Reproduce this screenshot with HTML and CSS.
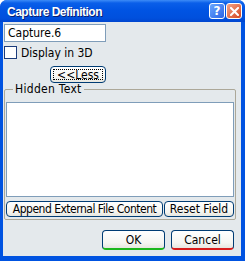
FILE: index.html
```html
<!DOCTYPE html>
<html>
<head>
	<title>Capture Definition</title>
	<link rel="stylesheet" href="styles.css">
</head>
<body>
	<div class="window">
		<div class="titlebar">
			<span class="title">Capture Definition</span>
			<div class="title-buttons">
				<span class="tbtn help">?</span>
				<span class="tbtn close">
					<svg width="9" height="9" viewBox="0 0 9 9"><path d="M1 1 L8 8 M8 1 L1 8" stroke="#fff" stroke-width="2" stroke-linecap="square"/></svg>
				</span>
			</div>
		</div>
		<div class="client">
			<div class="name-field">Capture.6</div>
			<label class="check-row"><span class="checkbox"></span>Display in 3D</label>
			<div class="less-row"><button class="btn less"><span class="focus">&lt;&lt;Less</span></button></div>
			<fieldset class="group">
				<legend>Hidden Text</legend>
				<div class="textarea"></div>
				<div class="group-buttons">
					<button class="btn append">Append External File Content</button>
					<button class="btn reset">Reset Field</button>
				</div>
			</fieldset>
			<div class="footer">
				<button class="btn ok">OK</button>
				<button class="btn cancel">Cancel</button>
			</div>
		</div>
	</div>
</body>
</html>
```

FILE: styles.css
```css
* {
	margin: 0;
	padding: 0;
	box-sizing: border-box;
}
body {
	font-family: 'DejaVu Sans Condensed', 'DejaVu Sans', sans-serif;
	font-size: 12px;
	background: #fff;
}
.window {
	width: 245px;
	height: 261px;
	background: #0053e1;
	border-radius: 7px 7px 0 0;
	display: flex;
	flex-direction: column;
}
.titlebar {
	height: 22px;
	display: flex;
	align-items: center;
	justify-content: space-between;
	padding: 0 3px 0 7px;
	background: linear-gradient(#3d8cf7 0, #0a5fe9 3px, #0054e3 10px, #0050dd 18px, #0046cf 22px);
	border-radius: 7px 7px 0 0;
}
.title {
	color: #fff;
	font-family: 'Liberation Sans', Arial, sans-serif;
	font-weight: bold;
	font-size: 12px;
	letter-spacing: -0.5px;
	text-shadow: 1px 1px #0a1e6e;
	padding-top: 1px;
}
.title-buttons {
	display: flex;
	gap: 1px;
}
.tbtn {
	width: 16px;
	height: 16px;
	border: 1px solid #fff;
	border-radius: 3px;
	display: flex;
	align-items: center;
	justify-content: center;
	color: #fff;
	font-weight: bold;
	font-size: 12px;
	font-family: 'DejaVu Sans', sans-serif;
}
.help {
	background: linear-gradient(135deg, #6aa6ff, #2a64e6);
}
.close {
	background: linear-gradient(135deg, #f3a488, #d4461f);
}
.client {
	flex: 1;
	margin: 0 4px 5px 3px;
	background: #e4e9ec;
	padding: 2px 0 0 1px;
	display: flex;
	flex-direction: column;
}
.name-field {
	width: 102px;
	height: 18px;
	background: #fff;
	border: 1px solid #7f9db9;
	padding: 1px 0 0 3px;
	color: #000;
	line-height: 14px;
}
.check-row {
	display: flex;
	align-items: center;
	gap: 4px;
	margin-top: 4px;
	height: 13px;
}
.checkbox {
	width: 13px;
	height: 13px;
	border: 1px solid #1c3c7c;
	background: #fff;
}
.less-row {
	padding-left: 46px;
	margin-top: 7px;
}
.btn {
	font-family: inherit;
	font-size: 12px;
	color: #000;
	padding: 0;
	white-space: nowrap;
	background: linear-gradient(#ffffff, #f5f5f1 70%, #e6e6df);
	border: 1px solid #003c74;
	border-radius: 4px;
	display: flex;
	align-items: center;
	justify-content: center;
}
.less {
	width: 56px;
	height: 17px;
	padding: 2px;
}
.less .focus {
	display: block;
	width: 100%;
	height: 100%;
	border: 1px dotted #000;
	line-height: 11px;
}
.group {
	border: 1px solid #aca899;
	border-radius: 2px;
	padding: 7px 1px 2px 1px;
	width: 230px;
}
.group legend {
	margin-left: 7px;
	padding: 0 2px;
	line-height: 12px;
	color: #000;
	letter-spacing: 0.3px;
}
.textarea {
	height: 95px;
	background: #fff;
	border: 1px solid #7f9db9;
}
.group-buttons {
	display: flex;
	gap: 1px;
	margin-top: 4px;
}
.append {
	width: 157px;
	height: 16px;
	letter-spacing: -0.5px;
}
.reset {
	width: 70px;
	height: 16px;
}
.footer {
	display: flex;
	justify-content: flex-end;
	gap: 6px;
	margin-top: 10px;
	padding-right: 7px;
}
.ok, .cancel {
	width: 63px;
	height: 20px;
}
.ok {
	border-bottom: 2px solid #1cb71c;
}
.cancel {
	border-bottom: 2px solid #d81c1c;
}
```
